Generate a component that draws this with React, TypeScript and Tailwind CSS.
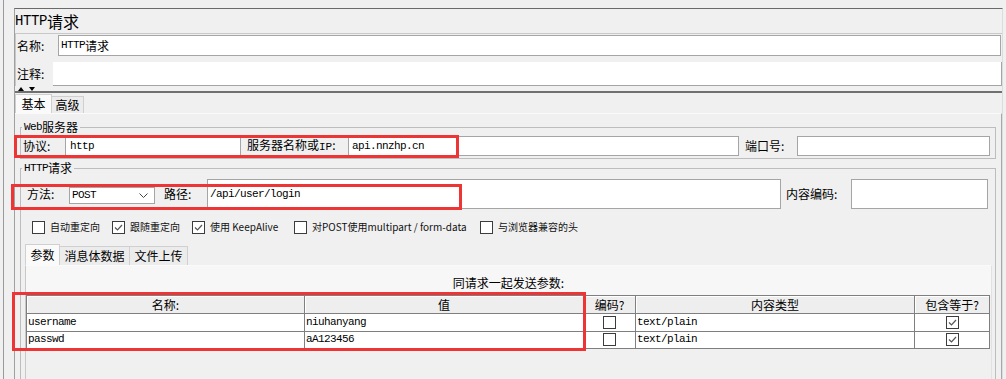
import React from 'react';

const mono = "font-['Liberation_Mono','Noto_Sans_CJK_SC',monospace] text-[11px] tracking-[-0.6px]";

const params = [
  { name: 'username', value: 'niuhanyang' },
  { name: 'passwd', value: 'aA123456' },
];

const options = [
  { label: '自动重定向', checked: false, w: 'w-[80px]' },
  { label: '跟随重定向', checked: true, w: 'w-[80px]' },
  { label: '使用 KeepAlive', checked: true, w: 'w-[102px]' },
  { label: '对POST使用multipart / form-data', checked: false, w: 'w-[186px]' },
  { label: '与浏览器兼容的头', checked: false, w: 'w-[120px]' },
];

const CheckBox: React.FC<{ checked?: boolean }> = ({ checked }) => (
  <span className="w-[13px] h-[13px] shrink-0 bg-white border border-[#3c3c3c] flex items-center justify-center">
    {checked && (
      <svg width="11" height="11" viewBox="0 0 11 11">
        <polyline points="2,5.5 4.5,8 9,3" fill="none" stroke="#555555" strokeWidth="1.2" />
      </svg>
    )}
  </span>
);

export default function App() {
  return (
    <div className="relative w-[1006px] h-[379px] overflow-hidden bg-[#f0f0f0] flex text-black font-['Noto_Sans_CJK_SC',sans-serif]">
      <div className="w-[14px] shrink-0 h-full">
        <div className="ml-[3px] h-full border-l border-[#9a9a9a]" />
      </div>

      <div className="w-[989px] shrink-0 mt-[8px] border-t border-l border-r border-t-[#6a6a6a] border-l-[#a0a0a0] border-r-[#dcdcdc] flex flex-col">
        {/* title */}
        <div className="h-[24px] shrink-0 flex items-center leading-none">
          <span className="font-['Liberation_Mono',monospace] text-[14px] tracking-[-0.4px]">HTTP</span>
          <span className="text-[16px]">请求</span>
        </div>

        {/* name / comment */}
        <div className="shrink-0 border-t border-l border-[#c8c8c8] pt-px">
          <div className="h-[21px] flex items-center">
            <span className="w-[42px] pl-px text-[12px] leading-none">名称:</span>
            <div className="flex-1 h-full mr-px bg-white border border-[#a5a5a5] flex items-center pl-[2px] leading-none">
              <span className={mono}>HTTP</span>
              <span className="text-[12px]">请求</span>
            </div>
          </div>
          <div className="h-[24px] mt-[6px] flex items-center">
            <span className="w-[37px] pl-px text-[12px] leading-none">注释:</span>
            <div className="flex-1 h-full bg-white border-b border-r border-[#a5a5a5]" />
          </div>
        </div>

        {/* split divider */}
        <div className="h-[7px] shrink-0 border-b-2 border-[#707070] flex items-start gap-[5px] pl-[3px] pt-px">
          <svg width="6" height="4" viewBox="0 0 6 4">
            <polygon points="3,0 6,4 0,4" fill="#000" />
          </svg>
          <svg width="6" height="4" viewBox="0 0 6 4">
            <polygon points="0,0 6,0 3,4" fill="#000" />
          </svg>
        </div>

        {/* tabs */}
        <div className="h-[19px] mt-px shrink-0 flex items-end">
          <div className="w-[37px] h-[19px] bg-[#fafafa] border border-b-0 border-[#cfcfcf] flex items-center justify-center text-[12px] leading-none">
            基本
          </div>
          <div className="w-[32px] h-[17px] bg-[#ececec] border border-b-0 border-l-0 border-[#cfcfcf] flex items-center justify-center text-[12px] leading-none">
            高级
          </div>
        </div>

        <div className="flex-1 border-t border-r border-t-[#fafafa] border-r-[#a8a8a8] px-[5px] pt-[6px]">
          {/* Web server */}
          <fieldset className="border border-[#bdbdbd] pb-[2px]">
            <legend className="ml-px px-[2px] h-[14px] flex items-center text-[12px] leading-none">
              <span className={mono}>Web</span>
              <span>服务器</span>
            </legend>
            <div className="mt-[2px] h-[20px] flex items-center pl-px text-[12px] leading-none">
              <span className="w-[43px] pl-px">协议:</span>
              <div className="w-[176px] h-full bg-white border border-[#a5a5a5] flex items-center pl-[4px]">
                <span className={mono}>http</span>
              </div>
              <span className="w-[107px] pl-[6px]">
                服务器名称或<span className="font-['Liberation_Mono',monospace] text-[11px]">IP</span>:
              </span>
              <div className="w-[391px] h-full bg-white border border-[#a5a5a5] flex items-center pl-[3px]">
                <span className={mono}>api.nnzhp.cn</span>
              </div>
              <span className="w-[58px] pl-[6px]">端口号:</span>
              <div className="w-[193px] h-full bg-white border border-[#a5a5a5]" />
            </div>
          </fieldset>

          {/* HTTP request */}
          <fieldset className="mt-[2px] border border-[#bdbdbd] h-[260px]">
            <legend className="ml-px px-[2px] h-[14px] flex items-center text-[12px] leading-none">
              <span className={mono}>HTTP</span>
              <span>请求</span>
            </legend>
            <div className="mt-[4px] h-[30px] flex items-center text-[12px] leading-none">
              <span className="w-[48px] pl-[6px]">方法:</span>
              <div className="w-[86px] h-[17px] self-start mt-[8px] bg-white border border-[#a5a5a5] flex items-center justify-between pl-[2px] pr-[6px]">
                <span className={mono}>POST</span>
                <svg width="9" height="5" viewBox="0 0 9 5">
                  <polyline points="0.5,0.5 4.5,4.5 8.5,0.5" fill="none" stroke="#444" />
                </svg>
              </div>
              <span className="w-[52px] pl-[9px]">路径:</span>
              <div className="w-[574px] h-full bg-white border border-[#a5a5a5] flex items-center pl-[2px]">
                <span className={mono}>/api/user/login</span>
              </div>
              <span className="w-[70px] pl-[5px]">内容编码:</span>
              <div className="w-[137px] h-full bg-white border border-[#a5a5a5]" />
            </div>

            <div className="mt-[11px] h-[14px] flex items-center pl-[11px]">
              {options.map((o) => (
                <div key={o.label} className={`${o.w} flex items-center gap-[5px]`}>
                  <CheckBox checked={o.checked} />
                  <span className="text-[10px] leading-none text-[#111] whitespace-nowrap">{o.label}</span>
                </div>
              ))}
            </div>

            {/* param tabs */}
            <div className="mt-[10px] ml-[4px] h-[21px] flex items-end text-[12px] leading-none">
              <div className="w-[35px] h-[21px] bg-[#fafafa] border border-b-0 border-[#d0d0d0] flex items-center justify-center">
                参数
              </div>
              <div className="w-[70px] h-[19px] bg-[#ececec] border border-b-0 border-l-0 border-[#d0d0d0] flex items-center justify-center">
                消息体数据
              </div>
              <div className="w-[58px] h-[19px] bg-[#ececec] border border-b-0 border-l-0 border-[#d0d0d0] flex items-center justify-center">
                文件上传
              </div>
            </div>

            <div className="ml-[4px] mr-[3px] h-[200px] border-t border-l border-r border-t-[#fafafa] border-l-[#c8c8c8] border-r-[#e2e2e2] bg-[#f7f7f7] flex flex-col">
              <div className="h-[29px] pt-[4px] flex items-center justify-center text-[12px] leading-none">
                同请求一起发送参数:
              </div>
              <div className="flex-1 bg-[#f0f0f0]">
                <div className="w-[964px] border-l border-t border-[#7f7f7f]">
                  <div className="grid grid-cols-[278px_279px_52px_279px_75px] h-[18px] text-[12px] leading-none">
                    {['名称:', '值', '编码?', '内容类型', '包含等于?'].map((h) => (
                      <div
                        key={h}
                        className="bg-[#eeeeee] border-r border-b border-[#7f7f7f] shadow-[inset_1px_1px_0_#ffffff] flex items-center justify-center"
                      >
                        {h}
                      </div>
                    ))}
                  </div>
                  {params.map((p) => (
                    <div key={p.name} className="grid grid-cols-[278px_279px_52px_279px_75px] h-[17px] bg-white">
                      <div className="border-r border-b border-[#7f7f7f] flex items-center pl-px">
                        <span className={mono}>{p.name}</span>
                      </div>
                      <div className="border-r border-b border-[#7f7f7f] flex items-center pl-px">
                        <span className={mono}>{p.value}</span>
                      </div>
                      <div className="border-r border-b border-[#7f7f7f] flex items-center justify-center">
                        <CheckBox />
                      </div>
                      <div className="border-r border-b border-[#7f7f7f] flex items-center pl-px">
                        <span className={mono}>text/plain</span>
                      </div>
                      <div className="border-r border-b border-[#7f7f7f] flex items-center justify-center">
                        <CheckBox checked />
                      </div>
                    </div>
                  ))}
                </div>
              </div>
            </div>
          </fieldset>
        </div>
      </div>

      {/* red annotation boxes */}
      <div className="absolute left-[14px] top-[135px] w-[445px] h-[23px] border-[3px] border-[#ee3535] pointer-events-none" />
      <div className="absolute left-[11px] top-[184px] w-[451px] h-[26px] border-[3px] border-[#ee3535] pointer-events-none" />
      <div className="absolute left-[12px] top-[292px] w-[574px] h-[59px] border-[3px] border-[#ee3535] pointer-events-none" />
    </div>
  );
}
